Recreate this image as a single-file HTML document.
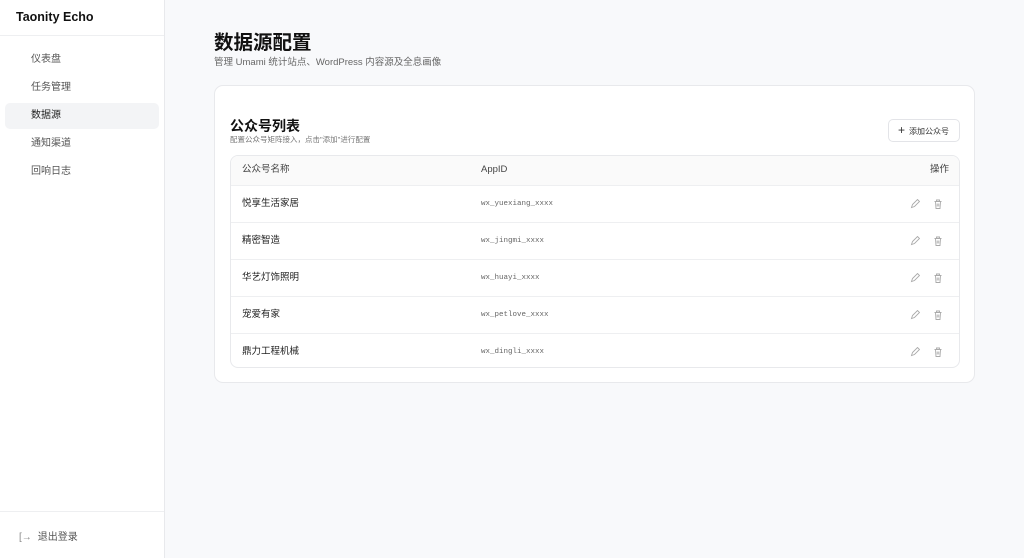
<!DOCTYPE html>
<html><head><meta charset="utf-8"><style>
*{box-sizing:border-box;margin:0;padding:0}
body{width:1024px;height:558px;overflow:hidden;font-family:"Liberation Sans","Noto Sans CJK SC",sans-serif;background:#f8f9fb;position:relative;color:#222}
.side{position:absolute;left:0;top:0;width:165px;height:558px;background:#fff;border-right:1px solid #e8e9ec}
.logo{height:36px;border-bottom:1px solid #eeeff1;font-weight:bold;font-size:12.5px;padding:10px 0 0 16px;color:#111}
.nav{padding-top:9px}
.nav div{height:26px;margin:2px 5px;border-radius:5px;font-size:10px;color:#555;line-height:26px;padding-left:26px}
.nav .act{background:#f3f4f6;color:#222}
.foot{position:absolute;left:0;right:0;top:511px;border-top:1px solid #eeeff1;font-size:10px;color:#555;padding:16px 0 0 19px}
h1{position:absolute;left:214px;top:30px;font-size:19.5px;font-weight:bold;color:#111;line-height:26px}
.sub{position:absolute;left:214px;top:56px;font-size:9.5px;color:#666;line-height:13px}
.card{position:absolute;left:214px;top:85px;width:761px;height:298px;background:#fff;border:1px solid #e8e9ec;border-radius:9px}
.ct{position:absolute;left:15px;top:31px;font-size:14px;font-weight:bold;color:#111;line-height:18px}
.cd{position:absolute;left:15px;top:49px;font-size:7.5px;color:#777;line-height:10px}
.btn{position:absolute;left:673px;top:33px;width:72px;height:23px;border:1px solid #e3e4e8;border-radius:5px;font-size:8px;color:#333;line-height:21px;padding-left:9px}
.tbl{position:absolute;left:15px;top:69px;width:730px;height:213px;border:1px solid #e8e9ec;border-radius:8px;overflow:hidden}
.row{height:37px;border-top:1px solid #eeeff1;position:relative;font-size:9.5px}
.hd{height:29px;background:#fafafa;border-top:none;color:#444}
.row span{position:absolute;top:0;line-height:36px;height:36px}
.hd span{line-height:28px;height:28px}
.n{left:11px}
.a{left:250px;font-family:"Liberation Mono",monospace;font-size:7.5px;color:#666}
.hd .a{font-family:"Liberation Sans",sans-serif;font-size:9.5px;color:#444}
.o{right:10px}
.ic{position:absolute;top:13px}
</style></head><body>
<div class="side">
<div class="logo">Taonity Echo</div>
<div class="nav"><div>仪表盘</div><div>任务管理</div><div class="act">数据源</div><div>通知渠道</div><div>回响日志</div></div>
<div class="foot"><span style="color:#888;margin-right:6px">[→</span>退出登录</div>
</div>
<h1>数据源配置</h1>
<div class="sub">管理 Umami 统计站点、WordPress 内容源及全息画像</div>
<div class="card">
<div class="ct">公众号列表</div>
<div class="cd">配置公众号矩阵接入，点击"添加"进行配置</div>
<div class="btn"><span style="font-size:12px;margin-right:4px">+</span>添加公众号</div>
<div class="tbl">
<div class="row hd"><span class="n">公众号名称</span><span class="a">AppID</span><span class="o">操作</span></div>
<div class="row"><span class="n">悦享生活家居</span><span class="a">wx_yuexiang_xxxx</span><svg class="ic" style="left:679px" width="10" height="10" viewBox="0 0 10 10" fill="none" stroke="#aaa" stroke-width="0.9"><path d="M1.5 8.5l1-3 5-5 2 2-5 5z"/></svg><svg class="ic" style="left:702px" width="10" height="10" viewBox="0 0 10 10" fill="none" stroke="#aaa" stroke-width="0.9"><path d="M1.5 2.5h7M3.5 2.5V1h3v1.5M2.5 2.5l.5 7h4l.5-7M4.2 4.5v3M5.8 4.5v3"/></svg></div>
<div class="row"><span class="n">精密智造</span><span class="a">wx_jingmi_xxxx</span><svg class="ic" style="left:679px" width="10" height="10" viewBox="0 0 10 10" fill="none" stroke="#aaa" stroke-width="0.9"><path d="M1.5 8.5l1-3 5-5 2 2-5 5z"/></svg><svg class="ic" style="left:702px" width="10" height="10" viewBox="0 0 10 10" fill="none" stroke="#aaa" stroke-width="0.9"><path d="M1.5 2.5h7M3.5 2.5V1h3v1.5M2.5 2.5l.5 7h4l.5-7M4.2 4.5v3M5.8 4.5v3"/></svg></div>
<div class="row"><span class="n">华艺灯饰照明</span><span class="a">wx_huayi_xxxx</span><svg class="ic" style="left:679px" width="10" height="10" viewBox="0 0 10 10" fill="none" stroke="#aaa" stroke-width="0.9"><path d="M1.5 8.5l1-3 5-5 2 2-5 5z"/></svg><svg class="ic" style="left:702px" width="10" height="10" viewBox="0 0 10 10" fill="none" stroke="#aaa" stroke-width="0.9"><path d="M1.5 2.5h7M3.5 2.5V1h3v1.5M2.5 2.5l.5 7h4l.5-7M4.2 4.5v3M5.8 4.5v3"/></svg></div>
<div class="row"><span class="n">宠爱有家</span><span class="a">wx_petlove_xxxx</span><svg class="ic" style="left:679px" width="10" height="10" viewBox="0 0 10 10" fill="none" stroke="#aaa" stroke-width="0.9"><path d="M1.5 8.5l1-3 5-5 2 2-5 5z"/></svg><svg class="ic" style="left:702px" width="10" height="10" viewBox="0 0 10 10" fill="none" stroke="#aaa" stroke-width="0.9"><path d="M1.5 2.5h7M3.5 2.5V1h3v1.5M2.5 2.5l.5 7h4l.5-7M4.2 4.5v3M5.8 4.5v3"/></svg></div>
<div class="row"><span class="n">鼎力工程机械</span><span class="a">wx_dingli_xxxx</span><svg class="ic" style="left:679px" width="10" height="10" viewBox="0 0 10 10" fill="none" stroke="#aaa" stroke-width="0.9"><path d="M1.5 8.5l1-3 5-5 2 2-5 5z"/></svg><svg class="ic" style="left:702px" width="10" height="10" viewBox="0 0 10 10" fill="none" stroke="#aaa" stroke-width="0.9"><path d="M1.5 2.5h7M3.5 2.5V1h3v1.5M2.5 2.5l.5 7h4l.5-7M4.2 4.5v3M5.8 4.5v3"/></svg></div>
</div>
</div>
</body></html>
